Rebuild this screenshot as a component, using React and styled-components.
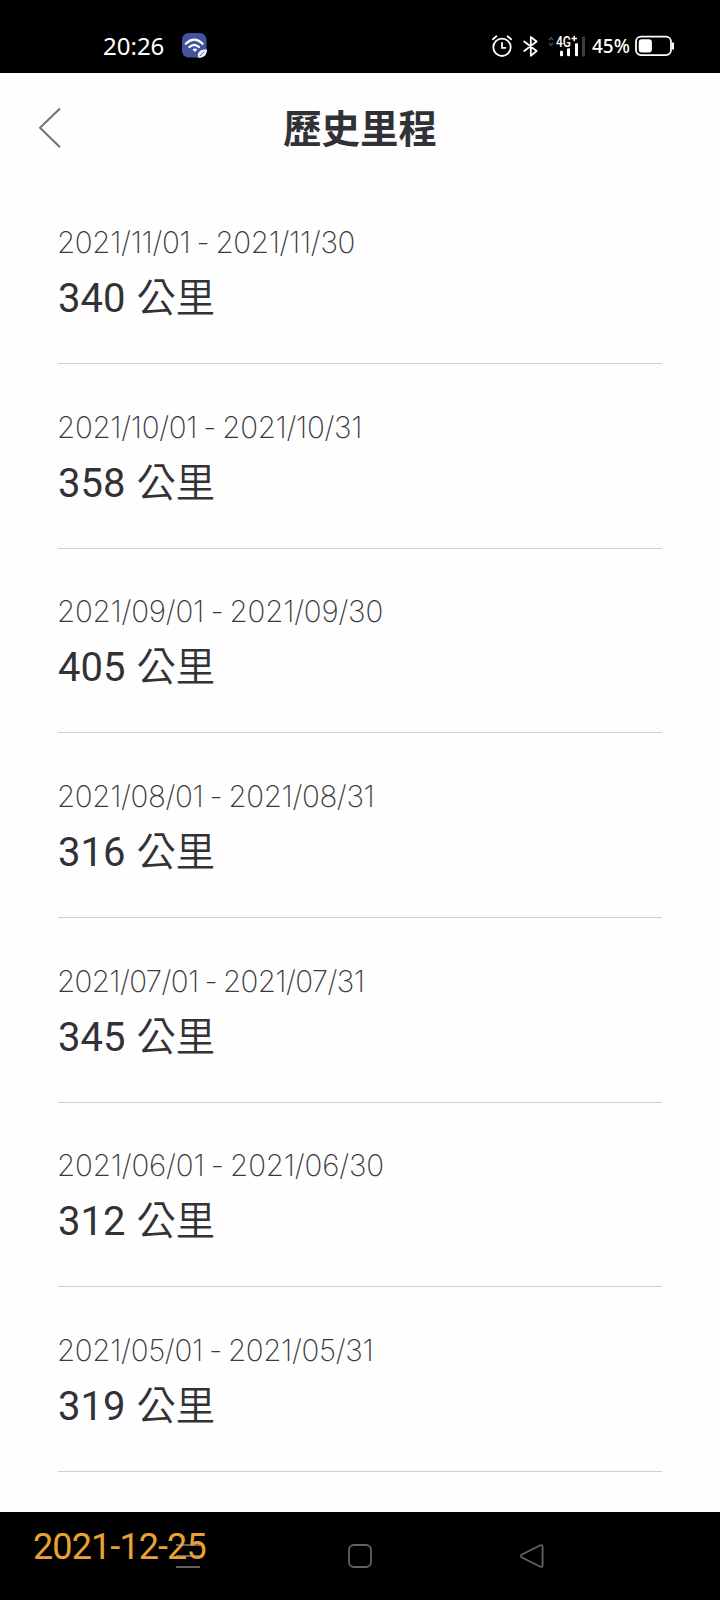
import styled, { createGlobalStyle } from "styled-components";

const months = [
  { period: "2021/11/01 - 2021/11/30", km: 340, tracking: -0.34 },
  { period: "2021/10/01 - 2021/10/31", km: 358, tracking: -0.32 },
  { period: "2021/09/01 - 2021/09/30", km: 405, tracking: -0.22 },
  { period: "2021/08/01 - 2021/08/31", km: 316, tracking: -0.36 },
  { period: "2021/07/01 - 2021/07/31", km: 345, tracking: -0.62 },
  { period: "2021/06/01 - 2021/06/30", km: 312, tracking: -0.18 },
  { period: "2021/05/01 - 2021/05/31", km: 319, tracking: -0.34 },
];

export default function App() {
  return (
    <Screen>
      <GlobalStyle />
      <StatusBar>
        <Clock>20:26</Clock>
        <WifiBadge />
        <Spacer />
        <StatusIcons />
        <Percent>45%</Percent>
        <Battery />
      </StatusBar>

      <Header>
        <BackButton aria-label="返回">
          <svg width="24" height="42" viewBox="0 0 24 42" fill="none">
            <path d="M22 1.5 2 20.8 22 40.2" stroke="#69757a" strokeWidth="2" />
          </svg>
        </BackButton>
        <Title>歷史里程</Title>
      </Header>

      <List>
        {months.map((month) => (
          <Row key={month.period}>
            <Period $tracking={month.tracking}>{month.period}</Period>
            <Distance>
              {month.km} <Unit>公里</Unit>
            </Distance>
          </Row>
        ))}
      </List>

      <NavBar>
        <svg width="24" height="24" viewBox="0 0 24 24">
          <path d="M0 1h24M0 12h24M0 23h24" stroke="#626262" strokeWidth="2" />
        </svg>
        <svg width="24" height="24" viewBox="0 0 24 24" fill="none">
          <rect x="1" y="1" width="22" height="22" rx="5" stroke="#626262" strokeWidth="1.8" />
        </svg>
        <svg width="24" height="24" viewBox="0 0 24 24" fill="none">
          <path
            d="M20.2 1.3 2 10.4Q-.2 12 2 13.6L20.2 22.7Q22.6 23.4 22.6 21V3Q22.6.6 20.2 1.3Z"
            stroke="#626262"
            strokeWidth="1.8"
          />
        </svg>
        <DateStamp>2021-12-25</DateStamp>
      </NavBar>
    </Screen>
  );
}

function WifiBadge() {
  return (
    <svg width="25" height="25" viewBox="0 0 25 25" fill="none">
      <rect width="24.5" height="24.5" rx="6.5" fill="#43549c" />
      <path
        d="M3.8 10.8Q12.2 2.6 20.6 10.8M7.4 14Q12.2 9.6 17 14"
        stroke="#fff"
        strokeWidth="2.2"
        strokeLinecap="round"
      />
      <path d="M10.5 16.2Q13.3 14.4 15.2 16.6L12.8 18.9Z" fill="#fff" />
      <path d="M16 24.5C15 18.5 19 16 25 16.5 25 22 21.5 25.5 16 24.5Z" fill="#f3f5fb" />
      <path d="M17.5 23.3 22 18.8" stroke="#43549c" strokeWidth="1" />
    </svg>
  );
}

function StatusIcons() {
  return (
    <Glyphs width="100" height="26" viewBox="0 0 100 26" fill="none">
      <g stroke="#fff" strokeWidth="1.8" strokeLinecap="round">
        <circle cx="10" cy="12.3" r="8.7" />
        <path d="M10 8v4.8h3.4M.9 4.2 4.4 1.3M19.1 4.2 15.6 1.3" />
        <path d="M32.2 6.5 44.6 16 38.8 20.7V2L44.6 6.5 32.2 16" strokeLinejoin="round" />
      </g>
      <path d="M57 5 59 2.8 61 5M57 8 59 10.2 61 8" stroke="#444" strokeWidth="1.6" />
      <NetworkText x="64" y="11.5" textLength="15" lengthAdjust="spacingAndGlyphs">
        4G
      </NetworkText>
      <path d="M79.4 3.5h5.6M82.2.7v5.6" stroke="#fff" strokeWidth="1.5" />
      <g fill="#fff">
        <rect x="68" y="15.7" width="3" height="5.6" rx="1" />
        <rect x="75" y="13.3" width="3" height="8" rx="1" />
        <rect x="83" y="8.3" width="3" height="13" rx="1" />
      </g>
      <rect x="90" y="1.5" width="3" height="20" rx=".5" fill="#3c3c3c" />
    </Glyphs>
  );
}

function Battery() {
  return (
    <svg width="40" height="21" viewBox="0 0 40 21" fill="none">
      <rect x="1" y="1.6" width="35" height="18.5" rx="5" stroke="#fff" strokeWidth="1.8" />
      <rect x="3.7" y="4.2" width="13.2" height="13.3" rx="3" fill="#fff" />
      <path d="M38 7.5v7" stroke="#fff" strokeWidth="2" />
    </svg>
  );
}

const GlobalStyle = createGlobalStyle`
  body {
    margin: 0;
    background: #fff;
  }
`;

const Screen = styled.div`
  width: 720px;
  height: 1600px;
  display: flex;
  flex-direction: column;
  overflow: hidden;
  background: #fefefe;
  color: #323236;
  font-family: Roboto, "Noto Sans CJK TC", sans-serif;
`;

const StatusBar = styled.div`
  box-sizing: border-box;
  flex: none;
  height: 73px;
  padding: 18px 45px 0 103px;
  display: flex;
  align-items: center;
  background: #000;
  color: #fff;
  font-family: "Noto Sans", sans-serif;
`;

const Clock = styled.span`
  width: 79px;
  font-size: 24px;
  line-height: 26px;
`;

const Spacer = styled.span`
  flex: 1;
`;

const Glyphs = styled.svg`
  margin-top: 4px;
  overflow: visible;
`;

const NetworkText = styled.text`
  fill: #fff;
  font: 500 14px Roboto, sans-serif;
`;

const Percent = styled.span`
  width: 38px;
  margin-right: 5px;
  font-size: 19px;
  font-weight: 500;
`;

const Header = styled.header`
  flex: none;
  height: 106.6px;
  display: grid;
  grid-template-columns: 100px 1fr 100px;
  align-items: center;
`;

const BackButton = styled.button`
  width: 100px;
  height: 42px;
  margin-top: 3px;
  padding: 0 0 0 38px;
  border: 0;
  background: none;
  text-align: left;
`;

const Title = styled.h1`
  margin: 0;
  text-align: center;
  font: 700 38.4px/56px "Noto Sans CJK TC", sans-serif;
`;

const List = styled.main`
  flex: 1;
  padding: 0 58px;
`;

const Row = styled.section`
  box-sizing: border-box;
  height: 184.6px;
  padding-top: 44.6px;
  border-bottom: 1px solid #cfcfcf;
`;

const Period = styled.div`
  margin-left: -1px;
  color: #3a3a3d;
  font: 250 29.5px/36px Inter, sans-serif;
  letter-spacing: ${(p) => p.$tracking}px;
  word-spacing: -1.8px;
  white-space: nowrap;
`;

const Distance = styled.div`
  margin-top: 11px;
  font-size: 40px;
  line-height: 48px;
  white-space: nowrap;
`;

const Unit = styled.span`
  margin-left: 1px;
  font-family: "Noto Sans CJK TC", sans-serif;
  font-size: 39.4px;
  font-weight: 350;
`;

const NavBar = styled.footer`
  position: relative;
  box-sizing: border-box;
  flex: none;
  height: 88px;
  padding: 0 176px;
  display: flex;
  align-items: center;
  justify-content: space-between;
  background: #000;
`;

/* camera-style date printed over the navigation keys */
const DateStamp = styled.span`
  position: absolute;
  left: 33px;
  top: 14px;
  color: #e8a236;
  font-size: 36px;
  line-height: 42px;
  letter-spacing: -0.9px;
`;
